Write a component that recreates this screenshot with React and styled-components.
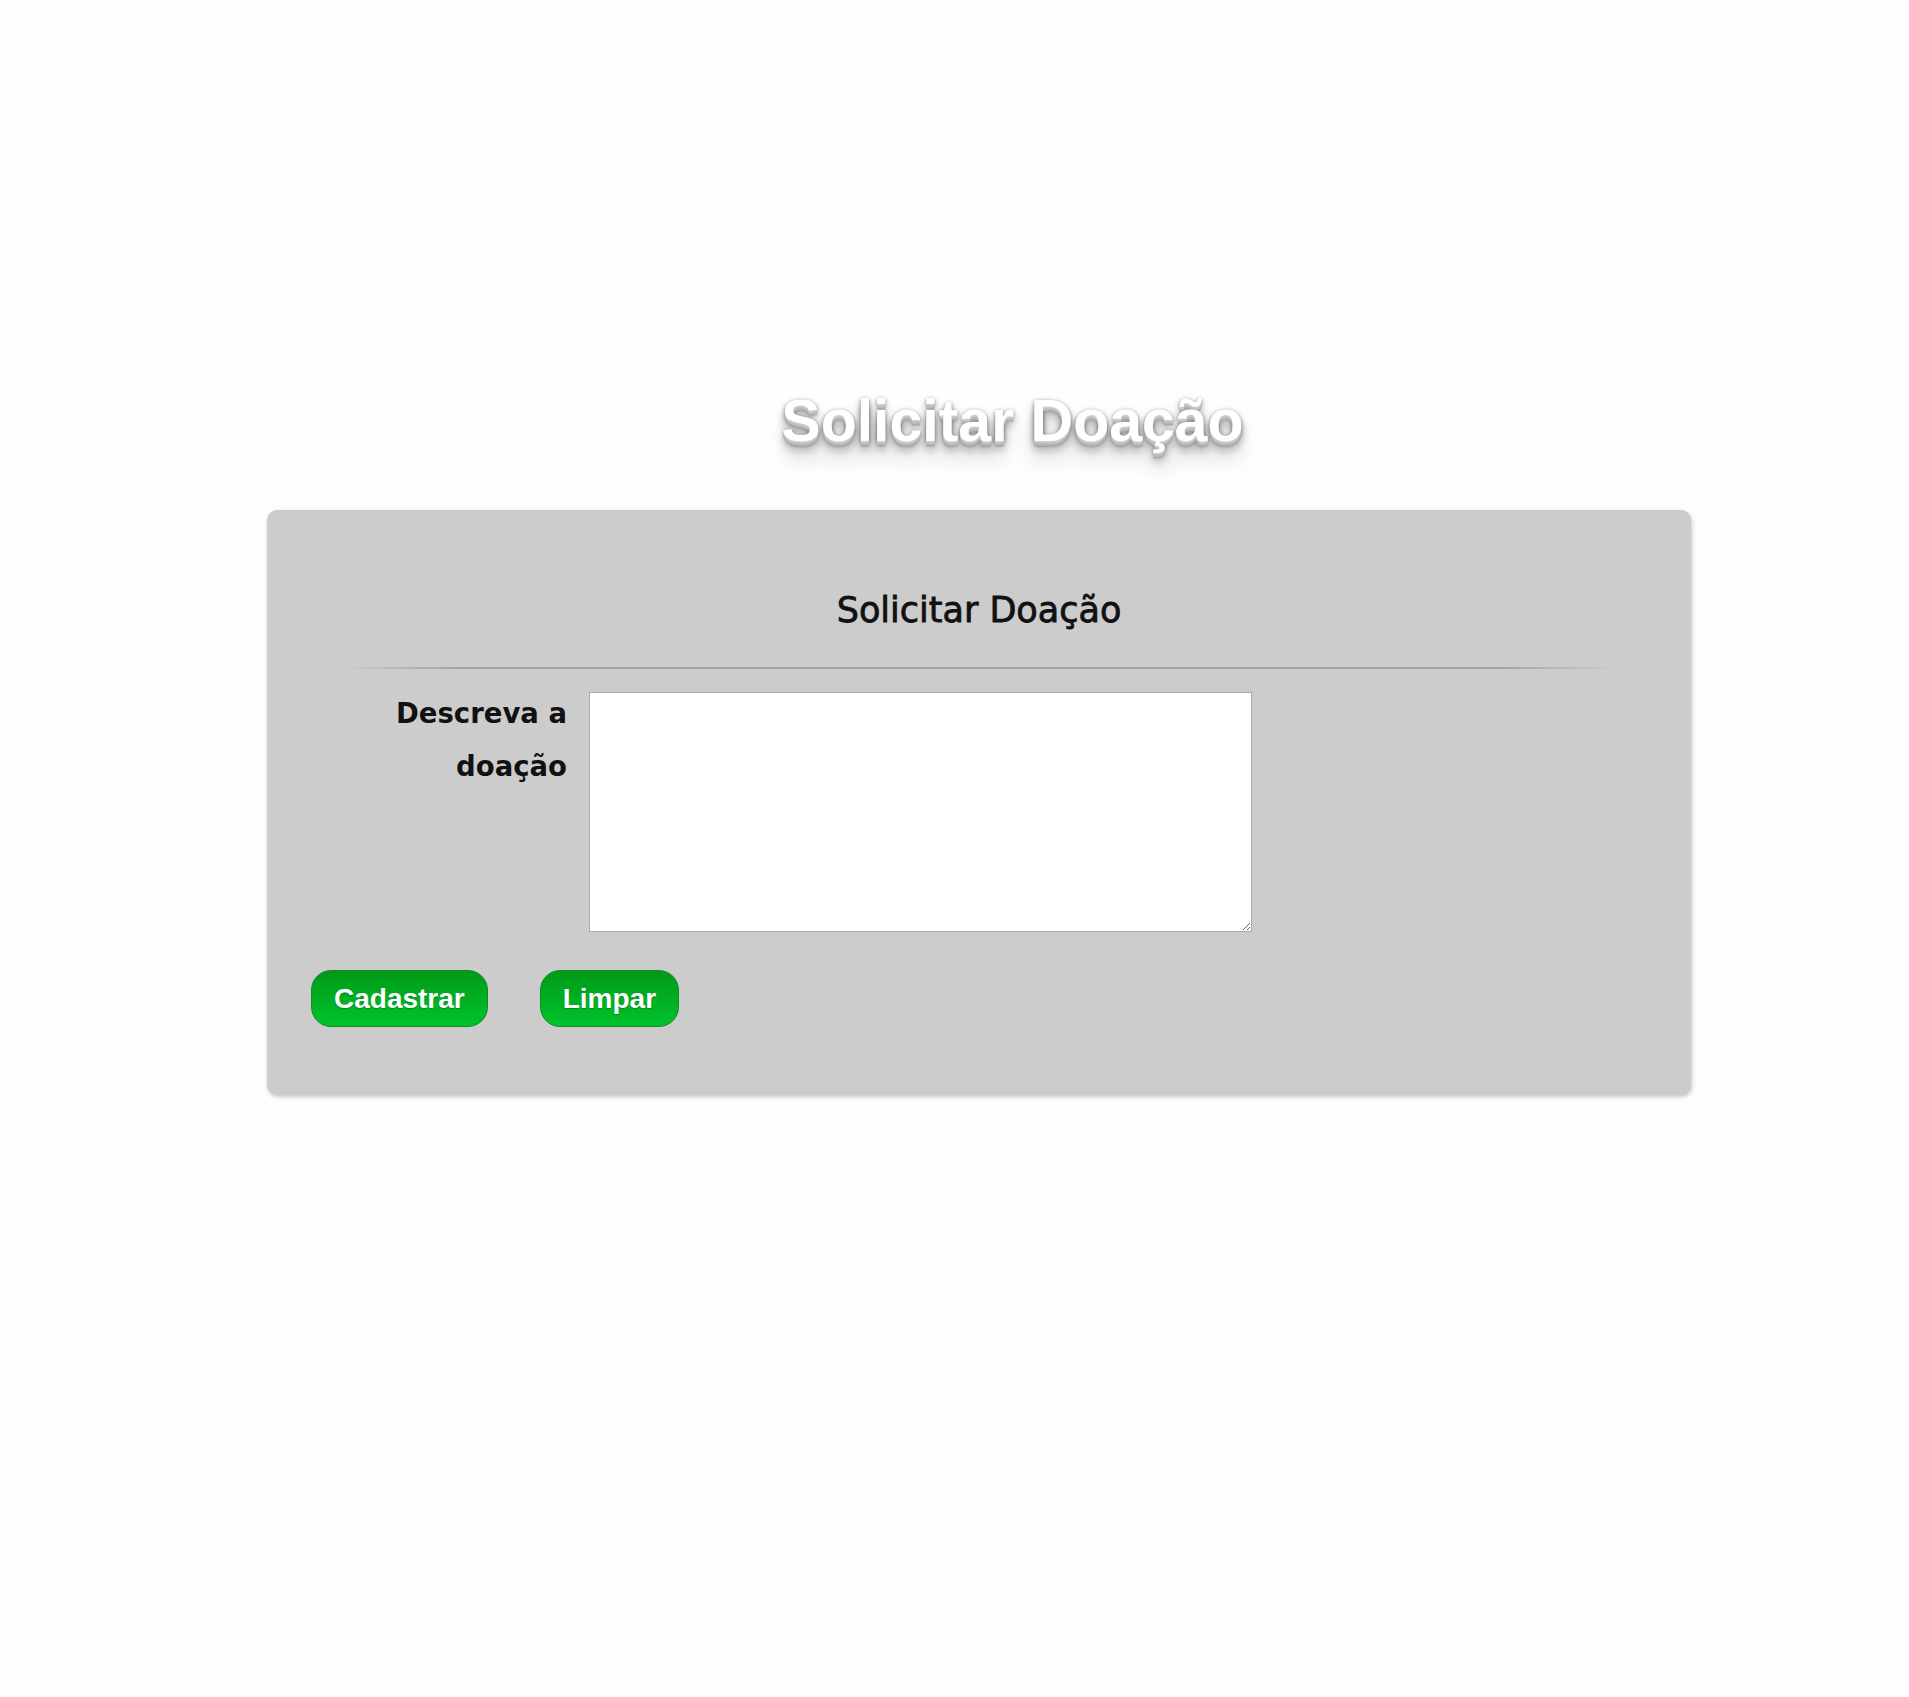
import React from 'react'
import styled, { createGlobalStyle } from 'styled-components'

const GlobalStyle = createGlobalStyle`
  html, body {
    margin: 0;
    padding: 0;
    background: #fefefe;
  }
  * {
    box-sizing: border-box;
  }
`

const Page = styled.div`
  width: 1909px;
  min-height: 1697px;
  padding-top: 388px;
`

const Title = styled.h1`
  margin: 0 0 56px;
  padding-left: 116px;
  text-align: center;
  font-family: "Liberation Sans", Arial, sans-serif;
  font-weight: bold;
  font-size: 59px;
  line-height: 66px;
  color: #fff;
  text-shadow:
    0 1px 0 #ccc,
    0 2px 0 #c9c9c9,
    0 3px 0 #bbb,
    0 4px 0 #b9b9b9,
    0 5px 0 #aaa,
    0 6px 1px rgba(0, 0, 0, 0.1),
    0 0 5px rgba(0, 0, 0, 0.1),
    0 1px 3px rgba(0, 0, 0, 0.3),
    0 3px 5px rgba(0, 0, 0, 0.2),
    0 5px 10px rgba(0, 0, 0, 0.25),
    0 10px 10px rgba(0, 0, 0, 0.2),
    0 20px 20px rgba(0, 0, 0, 0.15);
`

const Card = styled.form`
  margin-left: 267px;
  width: 1424px;
  padding: 80px 44px 68px;
  background: #cccccc;
  border-radius: 10px;
  box-shadow: 1px 2px 4px rgba(0, 0, 0, 0.22);
`

const CardTitle = styled.h2`
  margin: 0;
  text-align: center;
  font-family: "DejaVu Sans", Verdana, sans-serif;
  font-weight: normal;
  font-size: 35px;
  line-height: 40px;
  color: #111;
  -webkit-text-stroke: 0.8px #111;
`

const Divider = styled.hr`
  margin: 37px 32px 0;
  height: 2px;
  border: none;
  background: linear-gradient(
    to right,
    rgba(160, 160, 160, 0),
    #a3a3a3 9%,
    #a3a3a3 91%,
    rgba(160, 160, 160, 0)
  );
`

const Row = styled.div`
  display: flex;
  align-items: flex-start;
  gap: 22px;
  margin-top: 18px;
  padding-left: 66px;
`

const Label = styled.label`
  width: 190px;
  text-align: right;
  font-family: "DejaVu Sans", Verdana, sans-serif;
  font-weight: bold;
  font-size: 27.5px;
  line-height: 53px;
  color: #111;
`

const TextArea = styled.textarea`
  display: block;
  margin-top: 5px;
  width: 663px;
  height: 240px;
  border: 1px solid #a9a9a9;
  background: #fff;
  font-family: "Liberation Mono", monospace;
  font-size: 14px;
`

const Actions = styled.div`
  display: flex;
  gap: 52px;
  margin-top: 38px;
`

const Button = styled.button`
  height: 57px;
  padding: 0 22px;
  border: 1px solid #16862a;
  border-radius: 20px;
  background: linear-gradient(to bottom, #009a17, #00c32d);
  color: #fff;
  font-family: "Liberation Sans", Arial, sans-serif;
  font-weight: bold;
  font-size: 28px;
  text-shadow: 0 1px 1px rgba(0, 0, 0, 0.25);
  cursor: pointer;
`

const App = () => {
  return (
    <>
      <GlobalStyle />
      <Page>
        <Title>Solicitar Doação</Title>
        <Card onSubmit={e => e.preventDefault()}>
          <CardTitle>Solicitar Doação</CardTitle>
          <Divider />
          <Row>
            <Label htmlFor="descricao">Descreva a doação</Label>
            <TextArea id="descricao" />
          </Row>
          <Actions>
            <Button type="submit">Cadastrar</Button>
            <Button type="reset">Limpar</Button>
          </Actions>
        </Card>
      </Page>
    </>
  )
}

export default App
